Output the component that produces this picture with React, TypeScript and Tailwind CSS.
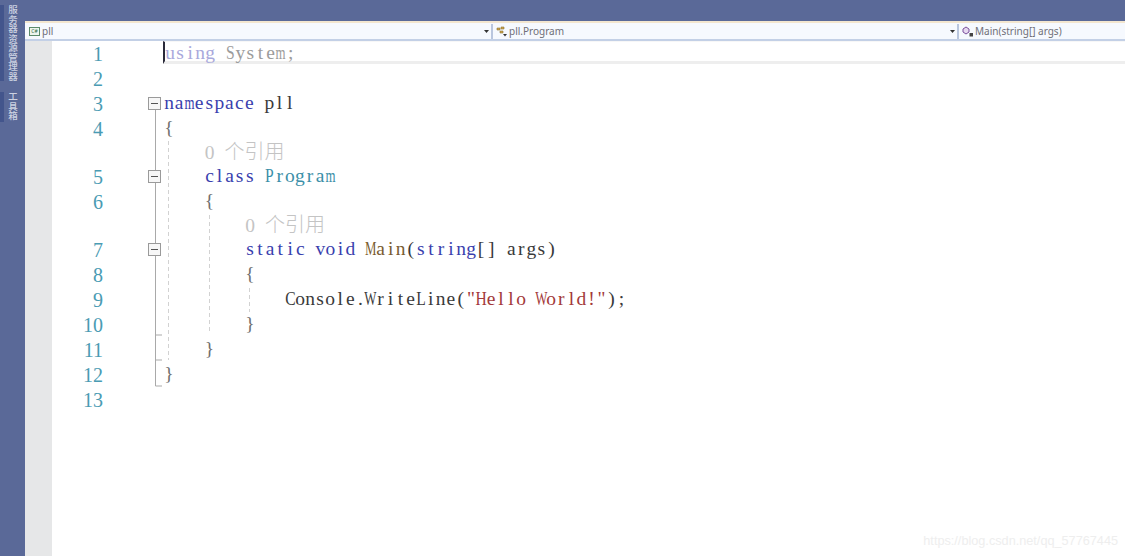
type Row = { n?: number; lens?: boolean; indent?: number; code?: React.ReactNode };

// the editor font is fixed pitch with serifs, so every character gets its own 10px cell
const cellClass = (ch: string) => {
  if ("mMwW".includes(ch)) return "inline-block scale-x-[0.66]";
  if (/[A-Z]/.test(ch)) return "inline-block scale-x-[0.8]";
  return "inline-block";
};

const Mono = ({ text, className = "" }: { text: string; className?: string }) => (
  <span className={className}>
    {text.split("").map((ch, i) => (
      <span key={i} className="inline-flex justify-center w-[10.05px] whitespace-pre">
        <span className={cellClass(ch)}>{ch}</span>
      </span>
    ))}
  </span>
);

const Kw = ({ text }: { text: string }) => <Mono text={text} className="text-[#3a3fae]" />;
const Brace = ({ text }: { text: string }) => <Mono text={text} className="text-[#6f6f6f]" />;

const Lens = () => (
  <>
    <Mono text="0 " />
    <span className="font-['Noto_Sans_CJK_SC',sans-serif] text-[20px] font-light">个引用</span>
  </>
);

const rows: Row[] = [
  { n: 1, code: <><Mono text="using" className="text-[#a9a9dc]" /><Mono text=" System;" className="text-[#9c9c9c]" /></> },
  { n: 2 },
  { n: 3, code: <><Kw text="namespace" /><Mono text=" pll" /></> },
  { n: 4, code: <Brace text="{" /> },
  { lens: true, indent: 4, code: <Lens /> },
  { n: 5, indent: 4, code: <><Kw text="class" /><Mono text=" " /><Mono text="Program" className="text-[#3b8fa8]" /></> },
  { n: 6, indent: 4, code: <Brace text="{" /> },
  { lens: true, indent: 8, code: <Lens /> },
  {
    n: 7,
    indent: 8,
    code: (
      <>
        <Kw text="static" />
        <Mono text=" " />
        <Kw text="void" />
        <Mono text=" " />
        <Mono text="Main" className="text-[#7a5c30]" />
        <Mono text="(" />
        <Kw text="string" />
        <Mono text="[] args)" />
      </>
    ),
  },
  { n: 8, indent: 8, code: <Brace text="{" /> },
  {
    n: 9,
    indent: 12,
    code: (
      <>
        <Mono text="Console.WriteLine(" />
        <Mono text={'"Hello World!"'} className="text-[#a33a3a]" />
        <Mono text=");" />
      </>
    ),
  },
  { n: 10, indent: 8, code: <Brace text="}" /> },
  { n: 11, indent: 4, code: <Brace text="}" /> },
  { n: 12, code: <Brace text="}" /> },
  { n: 13 },
];

const indents: Record<number, string> = {
  0: "pl-0",
  4: "pl-[40.5px]",
  8: "pl-[81px]",
  12: "pl-[121px]",
};

const NavItem = ({ className, icon, label }: { className: string; icon: React.ReactNode; label: string }) => (
  <div className={`flex items-center h-full ${className}`}>
    <div className="flex items-center flex-1 gap-[2px] pl-[3px] text-[#6f6f78]">
      {icon}
      <span>{label}</span>
    </div>
  </div>
);

const Arrow = () => (
  <svg width="5" height="3" viewBox="0 0 5 3" className="mr-[2px]">
    <path d="M0 0h5L2.5 3z" fill="#333" />
  </svg>
);

const OutlineLayer = () => (
  <svg width="200" height="400" viewBox="0 0 200 400" className="absolute left-[73px] top-0" fill="none">
    {/* y coordinates are relative to the editor top (41px) */}
    <path d="M30.5 69V345H37M30.5 294H37M30.5 319H37" stroke="#a9a9a9" strokeWidth="1" />
    <path d="M43.5 100V319M84.5 174V292M124.5 247V271" stroke="#d2d2d2" strokeDasharray="4 3" />
    {[56, 129, 202].map((y) => (
      <g key={y}>
        <rect x="23.5" y={y + 0.5} width="12" height="12" fill="#f7f7f7" stroke="#9a9a9a" />
        <path d={`M26 ${y + 6.5}H33`} stroke="#555" />
      </g>
    ))}
  </svg>
);

const App = () => {
  return (
    <div className="flex w-[1125px] h-[556px] overflow-hidden bg-white">
      <div className="flex flex-col w-[25px] shrink-0 pt-[5px] gap-[11px] bg-[#5a6998]">
        <div className="flex h-[76px]">
          <div className="w-[4px] bg-[#43558c]" />
          <div className="pl-[3px] [writing-mode:vertical-rl] font-['Noto_Sans_CJK_SC',sans-serif] font-medium text-[9.5px] leading-[12px] text-[#ccd2e2]">
            服务器资源管理器
          </div>
        </div>
        <div className="flex h-[30px]">
          <div className="w-[4px] bg-[#43558c]" />
          <div className="pl-[3px] [writing-mode:vertical-rl] font-['Noto_Sans_CJK_SC',sans-serif] font-medium text-[9.5px] leading-[12px] text-[#ccd2e2]">
            工具箱
          </div>
        </div>
      </div>

      <div className="flex flex-col flex-1 min-w-0">
        <div className="h-[21px] shrink-0 bg-[#5a6998]" />

        <div className="flex h-[20px] shrink-0 pt-[1px] border-t-2 border-t-[#f3e6cf] border-b-2 border-b-[#c3d0e6] bg-[#f6f9fe] font-['Noto_Sans',sans-serif] text-[10px]">
          <div className="flex items-center w-[466px]">
            <NavItem
              className="flex-1 pl-[1px]"
              label="pll"
              icon={
                <span className="flex items-center justify-center w-[11px] h-[9px] border border-[#5b8a6a] bg-[#eef5ee] text-[5px] leading-none text-[#2f6b45]">
                  C#
                </span>
              }
            />
            <Arrow />
          </div>
          <div className="w-[2px] bg-[#b9c6de]" />
          <div className="flex items-center w-[464px]">
            <NavItem
              className="flex-1"
              label="pll.Program"
              icon={
                <svg width="11" height="11" viewBox="0 0 11 11" fill="none">
                  <path d="M1 2h3v2H1zM5 1h3v2H5zM4 5h3v2H4z" fill="#d0a94e" stroke="#8f7430" strokeWidth=".6" />
                  <path d="M7 8h4L9 10.5z" fill="#333" />
                </svg>
              }
            />
            <Arrow />
          </div>
          <div className="w-[2px] bg-[#b9c6de]" />
          <NavItem
            className="flex-1"
            label="Main(string[] args)"
            icon={
              <svg width="11" height="12" viewBox="0 0 11 12" fill="none">
                <path d="M4 1 7 3v3L4 8 1 6V3z" fill="#e6d8f0" stroke="#7a4f9c" />
                <rect x="7.5" y="7" width="3.5" height="3.5" fill="#444" />
              </svg>
            }
          />
        </div>

        <div className="flex flex-1 min-h-0">
          <div className="w-[27px] shrink-0 bg-[#e6e7e8]" />
          <div className="relative flex-1 min-w-0 pt-[1px] font-['Liberation_Serif','Noto_Sans_CJK_SC',serif] text-[19.5px]">
            {rows.map((row, i) =>
              row.lens ? (
                <div key={i} className="flex h-[23px] leading-[18px] text-[#c4c4c4]">
                  <div className="w-[112px] shrink-0" />
                  <div className={indents[row.indent ?? 0]}>{row.code}</div>
                </div>
              ) : (
                <div key={i} className="flex h-[25px] leading-[22px] text-[#3a3a3a]">
                  <div className="w-[51px] shrink-0 text-right text-[#4a9bb3] text-[20px] leading-[24px]">{row.n}</div>
                  <div className="w-[61px] shrink-0" />
                  <div
                    className={`flex-1 whitespace-pre ${indents[row.indent ?? 0]} ${
                      row.n === 1 ? "border-b-[3px] border-t border-b-[#eeeeee] border-t-[#f7f7f7] border-l-2 border-l-[#2a2a3a] -ml-[1px] -mt-[1px] h-[23px] leading-[22px]" : ""
                    }`}
                  >
                    {row.code}
                  </div>
                </div>
              )
            )}
            <OutlineLayer />
            <div className="absolute right-[7px] bottom-[5px] font-['Liberation_Sans',sans-serif] text-[12.7px] leading-[20px] text-[#eeeeee]">
              https://blog.csdn.net/qq_57767445
            </div>
          </div>
        </div>
      </div>
    </div>
  );
};

export default App;
